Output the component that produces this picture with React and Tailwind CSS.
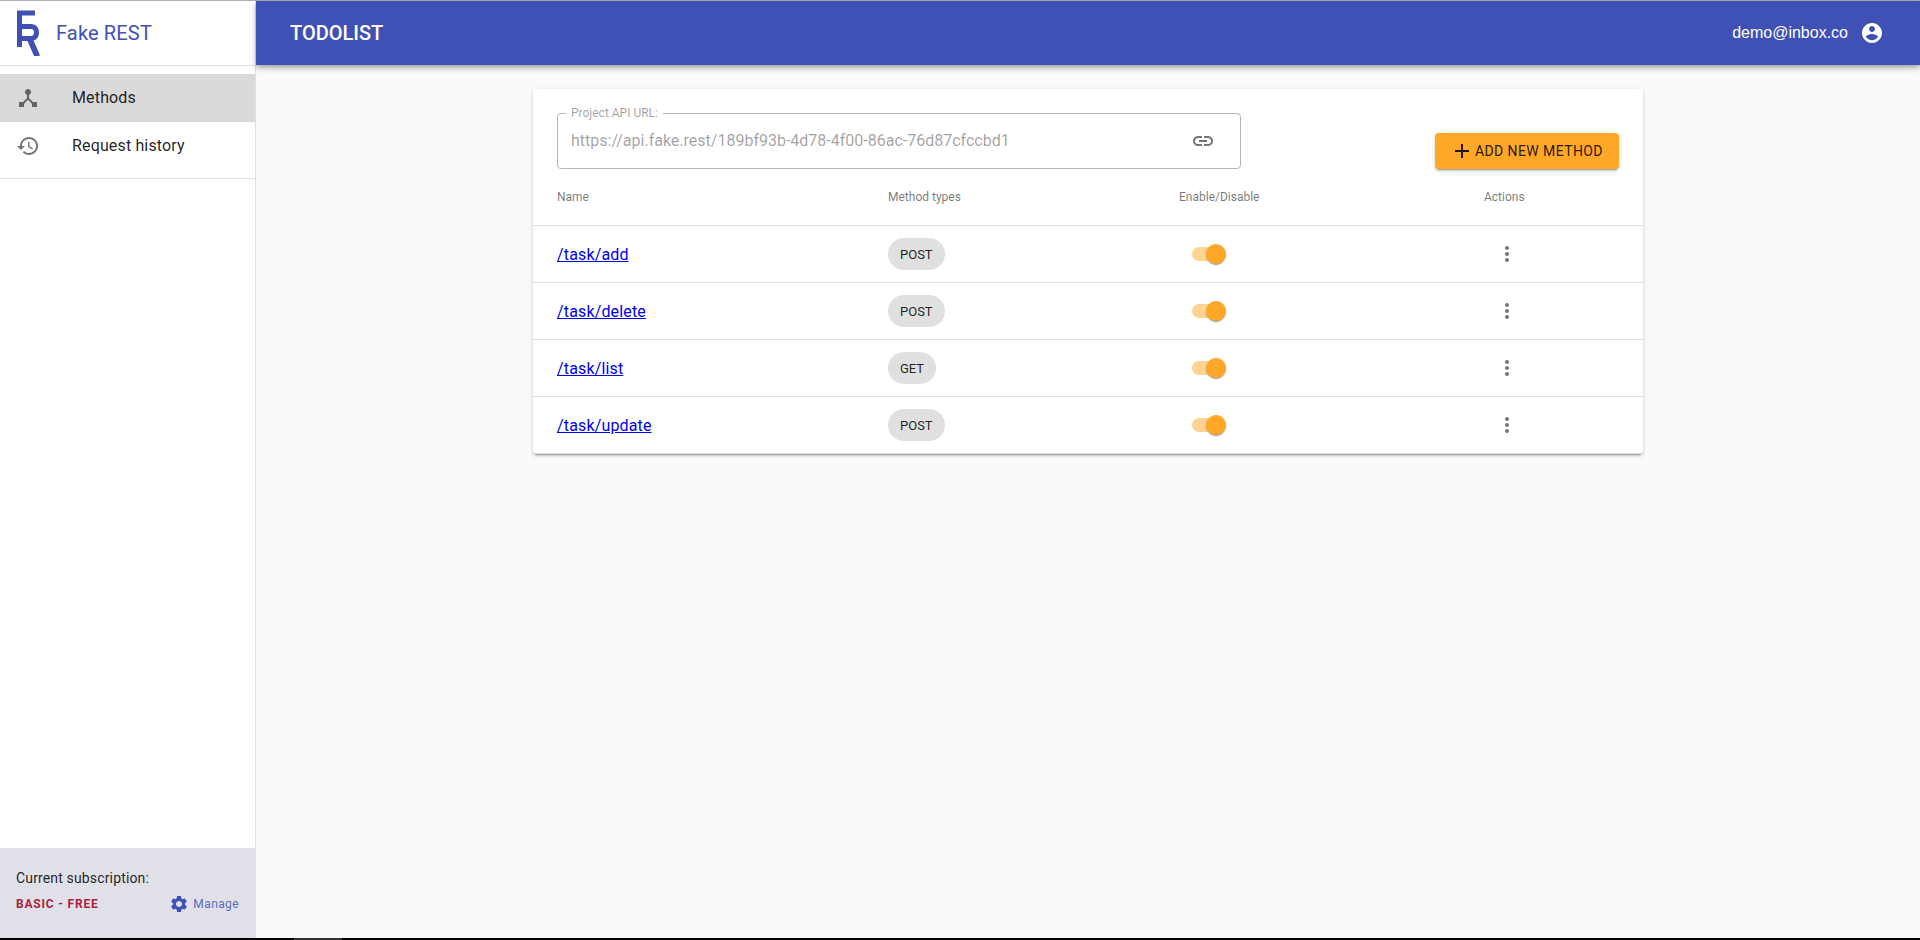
const methods = [
    { path: '/task/add', type: 'POST' },
    { path: '/task/delete', type: 'POST' },
    { path: '/task/list', type: 'GET' },
    { path: '/task/update', type: 'POST' },
];

const Icon = ({ d, className = '' }) => (
    <svg viewBox="0 0 24 24" className={`w-6 h-6 shrink-0 fill-current ${className}`}>
        <path d={d} />
    </svg>
);

const ICONS = {
    hub: 'M17 16l-4-4V8.82C14.16 8.4 15 7.3 15 6c0-1.66-1.34-3-3-3S9 4.34 9 6c0 1.3.84 2.4 2 2.82V12l-4 4H3v5h5v-3.05l4-4.2 4 4.2V21h5v-5h-4z',
    history: 'M13 3c-4.97 0-9 4.03-9 9H1l3.89 3.89.07.14L9 12H6c0-3.87 3.13-7 7-7s7 3.13 7 7-3.13 7-7 7c-1.93 0-3.68-.79-4.94-2.06l-1.42 1.42C8.27 19.99 10.51 21 13 21c4.97 0 9-4.03 9-9s-4.03-9-9-9zm-1 5v5l4.28 2.54.72-1.21-3.5-2.08V8H12z',
    account: 'M12 2C6.48 2 2 6.48 2 12s4.48 10 10 10 10-4.48 10-10S17.52 2 12 2zm0 3c1.66 0 3 1.34 3 3s-1.34 3-3 3-3-1.34-3-3 1.34-3 3-3zm0 14.2c-2.5 0-4.71-1.28-6-3.22.03-1.99 4-3.08 6-3.08 1.99 0 5.97 1.09 6 3.08-1.29 1.94-3.5 3.22-6 3.22z',
    link: 'M3.9 12c0-1.71 1.39-3.1 3.1-3.1h4V7H7c-2.76 0-5 2.24-5 5s2.24 5 5 5h4v-1.9H7c-1.71 0-3.1-1.39-3.1-3.1zM8 13h8v-2H8v2zm9-6h-4v1.9h4c1.71 0 3.1 1.39 3.1 3.1s-1.39 3.1-3.1 3.1h-4V17h4c2.76 0 5-2.24 5-5s-2.24-5-5-5z',
    more: 'M12 8c1.1 0 2-.9 2-2s-.9-2-2-2-2 .9-2 2 .9 2 2 2zm0 2c-1.1 0-2 .9-2 2s.9 2 2 2 2-.9 2-2-.9-2-2-2zm0 6c-1.1 0-2 .9-2 2s.9 2 2 2 2-.9 2-2-.9-2-2-2z',
    add: 'M19 13h-6v6h-2v-6H5v-2h6V5h2v6h6v2z',
    settings: 'M19.14 12.94c.04-.3.06-.61.06-.94 0-.32-.02-.64-.07-.94l2.03-1.58c.18-.14.23-.41.12-.61l-1.92-3.32c-.12-.22-.37-.29-.59-.22l-2.39.96c-.5-.38-1.03-.7-1.62-.94l-.36-2.54c-.04-.24-.24-.41-.48-.41h-3.84c-.24 0-.43.17-.47.41l-.36 2.54c-.59.24-1.13.57-1.62.94l-2.39-.96c-.22-.08-.47 0-.59.22L2.74 8.87c-.12.21-.08.47.12.61l2.03 1.58c-.05.3-.09.63-.09.94s.02.64.07.94l-2.03 1.58c-.18.14-.23.41-.12.61l1.92 3.32c.12.22.37.29.59.22l2.39-.96c.5.38 1.03.7 1.62.94l.36 2.54c.05.24.24.41.48.41h3.84c.24 0 .44-.17.47-.41l.36-2.54c.59-.24 1.13-.56 1.62-.94l2.39.96c.22.08.47 0 .59-.22l1.92-3.32c.12-.22.07-.47-.12-.61l-2.01-1.58zM12 15.6c-1.98 0-3.6-1.62-3.6-3.6s1.62-3.6 3.6-3.6 3.6 1.62 3.6 3.6-1.62 3.6-3.6 3.6z',
};

const Logo = () => (
    <svg viewBox="0 0 24 46" className="w-6 h-[46px] fill-[#3f51b5]">
        <path
            fillRule="evenodd"
            d="M1 0.5H19V5.5H6V14H15C20 14 23 17.5 23 22.5C23 26.5 21 29.5 17.5 30.5L23.5 44V46H18L11.5 31H6V37H1ZM6 19V26H15C17 26 18 24.5 18 22.5C18 20.5 17 19 15 19Z"
        />
    </svg>
);

const Sidebar = () => (
    <aside className="w-64 shrink-0 flex flex-col bg-white border-r border-[#e0e0e0]">
        <div className="h-[65px] shrink-0 flex items-center pl-4 border-b border-[#e0e0e0]">
            <Logo />
            <span className="ml-4 text-xl tracking-[0.15px] text-[#3f51b5]">Fake REST</span>
        </div>
        <nav className="py-2 border-b border-[#e0e0e0] tracking-[0.15px]">
            <div className="h-12 flex items-center pl-4 bg-[#dadada] text-black/87">
                <Icon d={ICONS.hub} className="text-black/54" />
                <span className="ml-8">Methods</span>
            </div>
            <div className="h-12 flex items-center pl-4 text-black/87">
                <Icon d={ICONS.history} className="text-black/54" />
                <span className="ml-8">Request history</span>
            </div>
        </nav>
        <div className="mt-auto h-[90px] bg-[#e0e1e8] pl-4 pr-4 pt-5">
            <p className="text-sm leading-5 tracking-[0.15px] text-black/87">Current subscription:</p>
            <div className="mt-[6px] flex items-center justify-between">
                <span className="text-xs font-bold tracking-[0.8px] text-[#ad1f3f]">BASIC - FREE</span>
                <span className="flex items-center text-xs tracking-[0.4px] text-[#3f51b5]/85">
                    <Icon d={ICONS.settings} className="!w-5 !h-5 mr-1 text-[#3f51b5]" />
                    Manage
                </span>
            </div>
        </div>
    </aside>
);

const Header = () => (
    <header className="relative z-10 h-16 shrink-0 flex items-center justify-between pl-[34px] pr-9 bg-[#3f51b5] text-white shadow-[0_2px_4px_-1px_rgba(0,0,0,0.2),0_4px_5px_0_rgba(0,0,0,0.14),0_1px_10px_0_rgba(0,0,0,0.12)]">
        <h1 className="text-xl font-medium">TODOLIST</h1>
        <div className="flex items-center gap-3 font-['Liberation_Sans',sans-serif]">
            demo@inbox.co
            <Icon d={ICONS.account} />
        </div>
    </header>
);

const Switch = () => (
    <div className="relative w-[34px] h-[14px] ml-[13px] rounded-full bg-[#ffa726]/50">
        <span className="absolute -top-[3px] right-0 w-5 h-5 rounded-full bg-[#ffa726] shadow-[0_2px_1px_-1px_rgba(0,0,0,0.2),0_1px_1px_0_rgba(0,0,0,0.14),0_1px_3px_0_rgba(0,0,0,0.12)]" />
    </div>
);

const COLS = 'grid grid-cols-[331px_291px_305px_1fr] items-center pl-6';

const MethodRow = ({ path, type }) => (
    <div className={`${COLS} h-[57px] border-b border-[#e0e0e0]`}>
        <a href="#" className="justify-self-start mt-0.5 tracking-[0.15px] text-[#0000ee] underline">{path}</a>
        <span className="justify-self-start h-8 flex items-center px-3 pt-0.5 rounded-full bg-[#e0e0e0] text-[13px] text-black/87">{type}</span>
        <Switch />
        <Icon d={ICONS.more} className="ml-[11px] text-black/54" />
    </div>
);

export default function App() {
    return (
        <div className="h-[940px] flex flex-col overflow-hidden font-['Roboto',sans-serif]">
            <div className="h-px shrink-0 bg-[#b0b0b0]" />
            <div className="flex-1 min-h-0 flex">
                <Sidebar />
                <div className="flex-1 min-w-0 flex flex-col bg-[#fafafa]">
                    <Header />
                    <main className="pt-6">
                        <section className="w-[1110px] mx-auto rounded bg-white shadow-[0_3px_1px_-2px_rgba(0,0,0,0.2),0_2px_2px_0_rgba(0,0,0,0.14),0_1px_5px_0_rgba(0,0,0,0.12)]">
                            <div className="flex items-end justify-between pt-6 px-6">
                                <fieldset className="relative w-[684px] h-14 rounded border border-[#b5b5b5] flex items-center justify-between pl-[13px] pr-[25px]">
                                    <legend className="absolute -top-[8px] left-2 px-[5px] bg-white text-xs leading-[15px] text-black/38">Project API URL:</legend>
                                    <span className="text-black/38">https://api.fake.rest/189bf93b-4d78-4f00-86ac-76d87cfccbd1</span>
                                    <Icon d={ICONS.link} className="text-black/54" />
                                </fieldset>
                                <button className="w-[184px] h-9 rounded flex items-center pl-[15px] bg-[#ffa726] text-sm tracking-[0.4px] text-black/87 shadow-[0_3px_1px_-2px_rgba(0,0,0,0.2),0_2px_2px_0_rgba(0,0,0,0.14),0_1px_5px_0_rgba(0,0,0,0.12)]">
                                    <Icon d={ICONS.add} className="mr-px" />
                                    ADD NEW METHOD
                                </button>
                            </div>
                            <div className={`${COLS} h-[57px] border-b border-[#e0e0e0] text-xs text-black/54`}>
                                <span>Name</span>
                                <span>Method types</span>
                                <span>Enable/Disable</span>
                                <span>Actions</span>
                            </div>
                            {methods.map((m) => <MethodRow key={m.path} {...m} />)}
                        </section>
                    </main>
                </div>
            </div>
            <div className="h-0.5 shrink-0 flex bg-black">
                <span className="ml-[294px] w-12 bg-[#333333]" />
            </div>
        </div>
    );
}
